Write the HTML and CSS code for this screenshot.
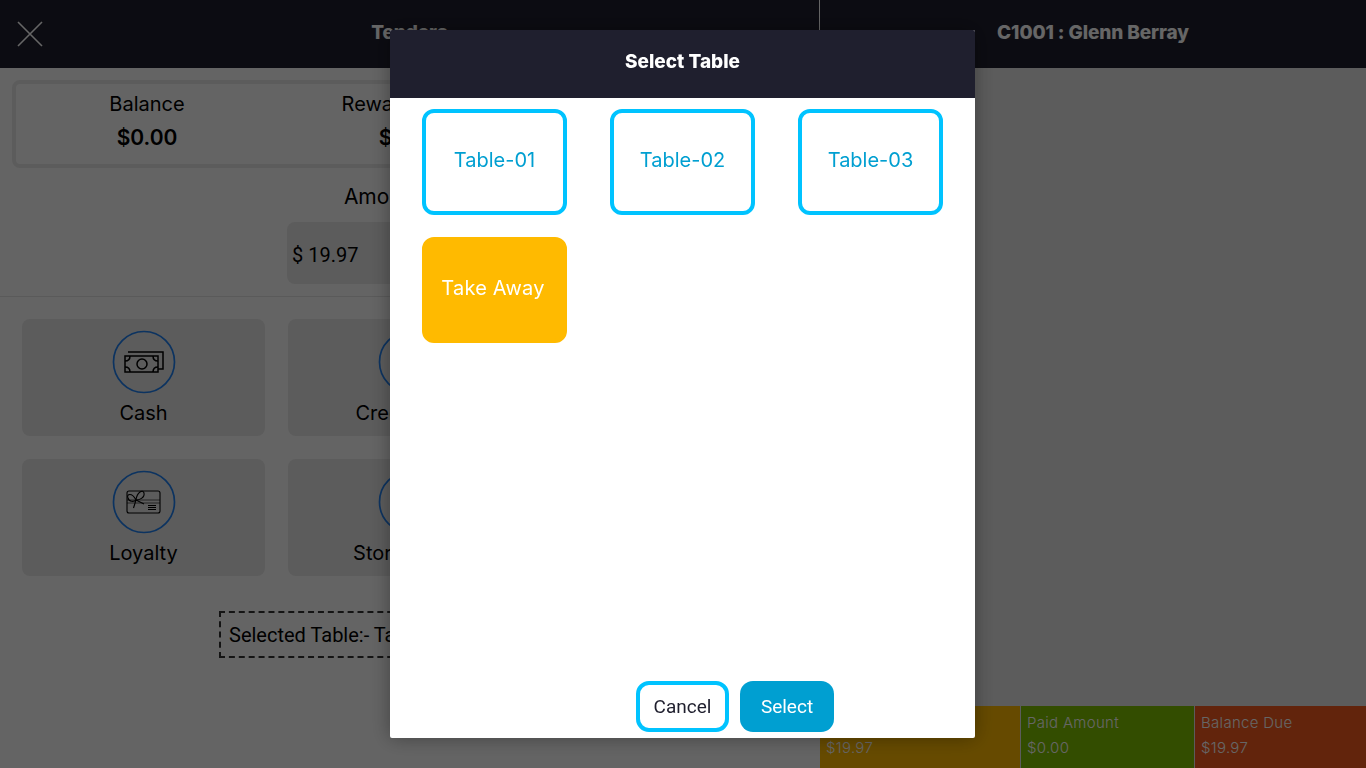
FILE: index.html
```html
<!DOCTYPE html>
<html lang="en">
<head>
  <meta charset="UTF-8" />
  <title>Tenders - Select Table</title>
  <link rel="stylesheet" href="styles.css">
</head>
<body>

  <div class="page">
    <section class="tenders">
      <header class="top-bar top-bar-left">
        <svg class="close-icon" width="26" height="26" viewBox="0 0 26 26">
          <path d="M1 1 L25 25 M25 1 L1 25" fill="none" stroke="#fff" stroke-width="1.6"/>
        </svg>
        <h1>Tenders</h1>
      </header>

      <div class="balance-card">
        <div class="balance-col">
          <span>Balance</span>
          <strong>$0.00</strong>
        </div>
        <div class="balance-col">
          <span>Reward Points</span>
          <strong>$0.00</strong>
        </div>
        <div class="balance-col"></div>
      </div>

      <div class="amount">
        <label>Amount Paid</label>
        <div class="amount-input">$ 19.97</div>
      </div>

      <div class="tender-grid">
        <div class="tender-btn">
          <svg class="tender-icon" width="64" height="64" viewBox="0 0 64 64">
            <circle cx="32" cy="32" r="30.5" fill="none" stroke="#2080f0" stroke-width="1.7"/>
            <g fill="none" stroke="#000" stroke-width="1.5">
              <rect x="13" y="26" width="33" height="16"/>
              <path d="M16 22 H51 V39 H46"/>
              <circle cx="30" cy="34" r="5"/>
              <path d="M13 31 Q18 31 18 26 M41 26 Q41 31 46 31 M13 37 Q18 37 18 42 M41 42 Q41 37 46 37"/>
            </g>
          </svg>
          <span>Cash</span>
        </div>
        <div class="tender-btn">
          <svg class="tender-icon" width="64" height="64" viewBox="0 0 64 64">
            <circle cx="32" cy="32" r="30.5" fill="none" stroke="#2080f0" stroke-width="1.7"/>
          </svg>
          <span>Credit Card</span>
        </div>
        <div class="tender-btn">
          <svg class="tender-icon" width="64" height="64" viewBox="0 0 64 64">
            <circle cx="32" cy="32" r="30.5" fill="none" stroke="#2080f0" stroke-width="1.7"/>
            <g fill="none" stroke="#000" stroke-width="1.1">
              <rect x="15" y="21" width="33" height="22" rx="2"/>
              <path d="M15 30 H48 M15 33 H48" stroke-opacity="0.6"/>
              <path d="M24 30 C20 22 14 24 16 28 C17 32 22 32 24 30 C25 22 31 19 32 23 C33 28 27 30 24 30 M24 30 L21.5 38 M24 30 L32 34"/>
              <path d="M36 35.5 H44 M36 37.5 H44 M36 39.5 H44"/>
            </g>
          </svg>
          <span>Loyalty</span>
        </div>
        <div class="tender-btn">
          <svg class="tender-icon" width="64" height="64" viewBox="0 0 64 64">
            <circle cx="32" cy="32" r="30.5" fill="none" stroke="#2080f0" stroke-width="1.7"/>
          </svg>
          <span>Store Credit</span>
        </div>
      </div>

      <div class="selected-table">Selected Table:- Take Away</div>
    </section>

    <section class="order">
      <header class="top-bar">
        <h1>C1001 : Glenn Berray</h1>
      </header>
      <div class="totals">
        <div class="total total-amber">
          <span>Total</span>
          <span>$19.97</span>
        </div>
        <div class="total total-green">
          <span>Paid Amount</span>
          <span>$0.00</span>
        </div>
        <div class="total total-red">
          <span>Balance Due</span>
          <span>$19.97</span>
        </div>
      </div>
    </section>
  </div>

  <div class="overlay">
    <div class="modal">
      <div class="modal-head">Select Table</div>
      <div class="table-grid">
        <button class="table-btn" type="button">Table-01</button>
        <button class="table-btn" type="button">Table-02</button>
        <button class="table-btn" type="button">Table-03</button>
        <button class="table-btn table-btn-active" type="button">Take Away</button>
      </div>
      <div class="modal-foot">
        <button class="foot-btn foot-cancel" type="button">Cancel</button>
        <button class="foot-btn foot-select" type="button">Select</button>
      </div>
    </div>
  </div>

</body>
</html>
```

FILE: styles.css
```css
* {
  box-sizing: border-box;
}

body {
  margin: 0;
  font-family: 'Inter', sans-serif;
  background-color: #fafafa;
  color: #000;
  overflow: hidden;
}

.page {
  display: flex;
  height: 768px;
}

.tenders {
  width: 820px;
  background-color: #fafafa;
}

.order {
  flex: 1;
  display: flex;
  flex-direction: column;
  background-color: #e6e6e6;
}

.top-bar {
  height: 68px;
  background-color: #1f1f2e;
  color: #fff;
  display: flex;
  align-items: center;
  justify-content: center;
  padding-bottom: 4px;
}

.top-bar-left {
  display: grid;
  grid-template-columns: 1fr auto 1fr;
  border-right: 1px solid #fff;
}

.top-bar h1 {
  margin: 0;
  font-size: 19px;
  font-weight: 800;
  letter-spacing: -0.1px;
}

.close-icon {
  margin: 4px 0 0 17px;
}

.balance-card {
  display: flex;
  height: 88px;
  margin: 12px 14px 0 12px;
  border: 4px solid #e6e6e6;
  border-radius: 8px;
}

.balance-col {
  flex: 1;
  display: flex;
  flex-direction: column;
  align-items: center;
  padding-top: 8px;
}

.balance-col span {
  font-size: 20px;
  line-height: 24px;
}

.balance-col strong {
  margin-top: 5px;
  font-size: 21px;
  line-height: 34px;
  font-weight: 600;
}

.amount {
  display: flex;
  flex-direction: column;
  align-items: center;
  height: 129px;
  padding-top: 16px;
  border-bottom: 1px solid #e0e0e0;
}

.amount label {
  margin-right: 6px;
  font-size: 21px;
  line-height: 26px;
}

.amount-input {
  width: 246px;
  height: 62px;
  margin-top: 12px;
  padding-left: 5px;
  background-color: #e6e6e6;
  border-radius: 8px;
  font-family: 'Roboto', sans-serif;
  font-size: 20px;
  line-height: 66px;
}

.tender-grid {
  display: grid;
  grid-template-columns: 243px 243px;
  grid-auto-rows: 117px;
  gap: 23px;
  padding: 22px 0 0 22px;
}

.tender-btn {
  display: flex;
  flex-direction: column;
  align-items: center;
  padding-top: 11px;
  background-color: #e6e6e6;
  border-radius: 8px;
  font-size: 20px;
}

.tender-icon {
  margin-bottom: 7px;
}

.selected-table {
  width: 382px;
  height: 47px;
  margin: 35px 0 0 219px;
  padding-left: 8px;
  border: 2px dashed #333;
  font-family: 'Roboto', sans-serif;
  font-size: 20px;
  line-height: 45px;
}

.totals {
  display: flex;
  gap: 1px;
  margin-top: auto;
  height: 62px;
}

.total {
  display: flex;
  flex-direction: column;
  gap: 6px;
  padding: 7px 6px 0;
  color: #fff;
  font-size: 15px;
  font-weight: 300;
  letter-spacing: 0.3px;
  line-height: 19px;
}

.total-amber {
  width: 200px;
  background-color: #ffba00;
}

.total-green {
  width: 173px;
  background-color: #80c000;
}

.total-red {
  flex: 1;
  background-color: #f55a1e;
}

/* dim layer and table picker */
.overlay {
  position: fixed;
  inset: 0;
  display: flex;
  align-items: center;
  justify-content: center;
  padding-right: 1px;
  background-color: rgba(0, 0, 0, 0.6);
}

.modal {
  width: 585px;
  height: 708px;
  display: flex;
  flex-direction: column;
  background-color: #fff;
  border-radius: 2px;
  box-shadow: 0 0 20px rgba(0, 0, 0, 0.35);
}

.modal-head {
  height: 68px;
  flex-shrink: 0;
  display: flex;
  align-items: center;
  justify-content: center;
  padding-bottom: 6px;
  background-color: #1f1f2e;
  color: #fff;
  font-size: 19px;
  font-weight: 800;
  border-radius: 2px 2px 0 0;
}

.table-grid {
  flex: 1;
  display: grid;
  grid-template-columns: repeat(3, 145px);
  grid-auto-rows: 106px;
  align-content: start;
  column-gap: 43px;
  row-gap: 22px;
  padding: 11px 0 0 32px;
}

.table-btn {
  padding: 0 0 5px;
  background-color: #fff;
  border: 4px solid #00c3ff;
  border-radius: 12px;
  color: #009fd1;
  font-family: 'Inter', sans-serif;
  font-size: 20px;
}

.table-btn-active {
  padding-right: 3px;
  background-color: #ffba00;
  border-color: #ffba00;
  color: #fff;
  letter-spacing: 0.2px;
}

.modal-foot {
  display: grid;
  grid-template-columns: 1fr 93px 1fr;
  column-gap: 11px;
  height: 51px;
  margin-bottom: 6px;
}

.foot-btn {
  height: 51px;
  border-radius: 13px;
  font-family: 'Roboto', sans-serif;
  font-size: 19px;
}

.foot-cancel {
  grid-column: 2;
  background-color: #fff;
  border: 4px solid #00c3ff;
  color: #1f1f2e;
}

.foot-select {
  width: 94px;
  background-color: #009fd1;
  border: none;
  color: #fff;
}
```
